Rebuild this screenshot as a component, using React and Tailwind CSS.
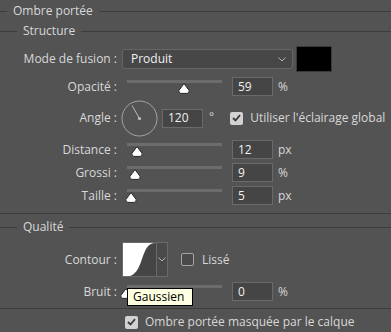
import React from 'react';

const font = "font-['Open_Sans','Noto_Sans',sans-serif]";

function Thumb({ className }) {
  return (
    <svg className={`absolute top-[6px] ${className}`} width="12" height="11" viewBox="0 0 12 11">
      <path d="M6 0.6 L11.1 7.4 Q11.6 10.4 9 10.4 H3 Q0.4 10.4 0.9 7.4 Z" fill="#ffffff" stroke="#262626" strokeWidth="1" />
    </svg>
  );
}

function Chevron({ className }) {
  return (
    <svg className={className} width="8" height="5" viewBox="0 0 8 5">
      <path d="M0.5 0.5 L4 4 L7.5 0.5" fill="none" stroke="#b4b4b4" strokeWidth="1" />
    </svg>
  );
}

function Check({ checked }) {
  if (checked) {
    return (
      <div className="flex h-[13px] w-[13px] items-center justify-center rounded-[2px] bg-[#d2d2d2]">
        <svg width="9" height="8" viewBox="0 0 9 8">
          <path d="M1 4 L3.5 6.5 L8 1.2" fill="none" stroke="#3a3a3a" strokeWidth="1.8" />
        </svg>
      </div>
    );
  }
  return <div className="h-[13px] w-[13px] rounded-[2px] border border-[#a5a5a5] bg-[#4a4a4a]" />;
}

function Header({ title, lead, h }) {
  return (
    <div className={`flex items-center ${h}`}>
      <div className={`h-px bg-[#3c3c3c] ${lead}`} />
      <span className="px-[6px]">{title}</span>
      <div className="h-px flex-1 bg-[#3c3c3c]" />
    </div>
  );
}

function Field({ value, w = 'w-[41px]', className = '' }) {
  return (
    <div className={`flex h-[19px] items-center border border-[#6a6a6a] bg-[#454545] pl-[5px] text-[#f0f0f0] ${w} ${className}`}>
      {value}
    </div>
  );
}

function SliderRow({ label, value, unit, thumb, className = '' }) {
  return (
    <div className={`flex h-[19px] items-center ${className}`}>
      <div className="w-[117px] text-right">{label} :</div>
      <div className="relative ml-[10px] h-full w-[95px]">
        <div className="absolute left-0 right-0 top-[3px] h-[3px] bg-[#6c6c6c]" />
        <Thumb className={thumb} />
      </div>
      <Field value={value} className="ml-[10px]" />
      <span className="ml-[5px]">{unit}</span>
    </div>
  );
}

export default function App() {
  return (
    <div className={`h-[332px] w-[391px] overflow-hidden bg-[#535353] text-[12px] leading-none text-[#d8d8d8] ${font}`}>
      <Header title="Ombre portée" lead="w-[7px]" h="h-[22px]" />
      <Header title="Structure" lead="w-[17px]" h="h-[18px]" />

      <div className="mt-[6px] flex h-[26px] items-center">
        <div className="w-[117px] text-right">Mode de fusion :</div>
        <div className="ml-[5px] flex h-[20px] w-[171px] items-center justify-between rounded-[3px] border border-[#666666] bg-[#474747] pl-[8px] pr-[6px] text-[#f0f0f0]">
          <span>Produit</span>
          <Chevron />
        </div>
        <div className="ml-[3px] h-[26px] w-[36px] border border-[#3a3a3a] bg-black" />
      </div>

      <SliderRow label="Opacité" value="59" unit="%" thumb="left-[51px]" className="mt-[5px]" />

      <div className="mt-[4px] flex h-[36px] items-center">
        <div className="w-[117px] text-right">Angle :</div>
        <svg className="ml-[4px]" width="37" height="37" viewBox="0 0 37 37">
          <circle cx="18.5" cy="18.5" r="17.5" fill="none" stroke="#a3a3a3" strokeWidth="1" />
          <line x1="18.5" y1="18.5" x2="11" y2="5.5" stroke="#b8b8b8" strokeWidth="1" />
          <circle cx="18.5" cy="18.5" r="1.6" fill="#c0c0c0" />
        </svg>
        <Field value="120" w="w-[41px]" className="ml-[4px]" />
        <span className="ml-[6px] self-start pt-[11px]">°</span>
        <div className="ml-[16px]">
          <Check checked />
        </div>
        <span className="ml-[7px]">Utiliser l'éclairage global</span>
      </div>

      <SliderRow label="Distance" value="12" unit="px" thumb="left-[4px]" className="mt-[4px]" />
      <SliderRow label="Grossi" value="9" unit="%" thumb="left-[2px]" className="mt-[4px]" />
      <SliderRow label="Taille" value="5" unit="px" thumb="-left-[2px]" className="mt-[4px]" />

      <div className="mt-[8px] h-px bg-[#3c3c3c]" />

      <Header title="Qualité" lead="w-[17px]" h="mt-[4px] h-[18px]" />

      <div className="mt-[6px] flex h-[35px] items-center">
        <div className="w-[117px] text-right">Contour :</div>
        <div className="ml-[5px] flex h-[35px] w-[46px] border border-[#6a6a6a] bg-[#454545]">
          <svg width="33" height="33" viewBox="0 0 33 33">
            <path d="M0 0 H32 C26 0 23 5 20 13 C17 22 14 31 7 33 H0 Z" fill="#ffffff" />
          </svg>
          <div className="flex flex-1 items-center justify-center border-l border-[#6a6a6a] bg-[#4a4a4a]">
            <Chevron />
          </div>
        </div>
        <div className="ml-[13px]">
          <Check />
        </div>
        <span className="ml-[8px]">Lissé</span>
      </div>

      <div className="relative">
        <SliderRow label="Bruit" value="0" unit="%" thumb="-left-[7px]" className="mt-[5px]" />
        <div className="absolute left-[127px] top-[6px] flex h-[18px] w-[66px] items-center border border-black bg-[#ffffe1] pl-[5px] text-black">
          Gaussien
        </div>
      </div>

      <div className="mt-[7px] h-px bg-[#3c3c3c]" />

      <div className="mt-[3px] flex h-[20px] items-center">
        <div className="ml-[125px]">
          <Check checked />
        </div>
        <span className="ml-[7px]">Ombre portée masquée par le calque</span>
      </div>
    </div>
  );
}
